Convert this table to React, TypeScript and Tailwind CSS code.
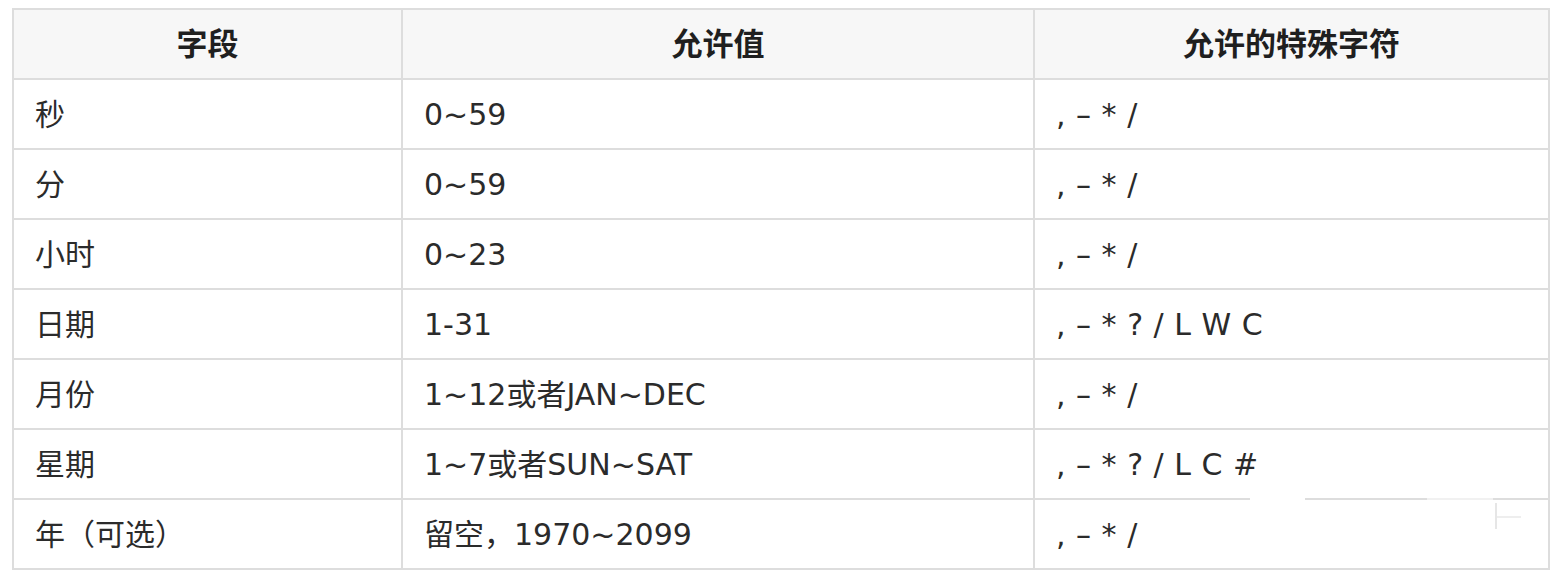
const rows: [string, string, string][] = [
  ["秒", "0~59", ", – * /"],
  ["分", "0~59", ", – * /"],
  ["小时", "0~23", ", – * /"],
  ["日期", "1-31", ", – * ? / L W C"],
  ["月份", "1~12或者JAN~DEC", ", – * /"],
  ["星期", "1~7或者SUN~SAT", ", – * ? / L C #"],
  ["年（可选）", "留空，1970~2099", ", – * /"],
];

const cell = "border-2 border-[#dddddd] px-[21px]";
const head = "border-2 border-[#dddddd] font-bold text-center text-[31px] text-[#1f1f1f]";

export default function App() {
  return (
    <div className="relative w-[1556px] h-[584px] bg-white pt-2 pl-3 font-['DejaVu_Sans','Noto_Sans_CJK_SC',sans-serif] text-[#2b2b2b]">
      <table className="w-[1536px] table-fixed border-collapse border-2 border-[#dddddd] text-[30px]">
        <colgroup>
          <col className="w-[389px]" />
          <col className="w-[632px]" />
          <col className="w-[515px]" />
        </colgroup>
        <thead>
          <tr className="h-[70px] bg-[#f7f7f7]">
            <th className={head}>字段</th>
            <th className={head}>允许值</th>
            <th className={head}>允许的特殊字符</th>
          </tr>
        </thead>
        <tbody>
          {rows.map((r, i) => (
            <tr key={i} className="h-[70px]">
              <td className={cell}>{r[0]}</td>
              <td className={cell}>{r[1]}</td>
              <td className={`${cell} [word-spacing:1px]`}>{r[2]}</td>
            </tr>
          ))}
        </tbody>
      </table>
      {/* leftovers of an erased watermark over the last row border */}
      <div className="absolute left-[1250px] top-[496px] w-[55px] h-[5px] bg-white" />
      <div className="absolute left-[1427px] top-[496px] w-[66px] h-[5px] bg-white/60" />
      <div className="absolute left-[1495px] top-[503px] w-[2px] h-[26px] bg-[#e6e6e6]" />
      <div className="absolute left-[1497px] top-[516px] w-[24px] h-[2px] bg-[#eeeeee]" />
    </div>
  );
}
